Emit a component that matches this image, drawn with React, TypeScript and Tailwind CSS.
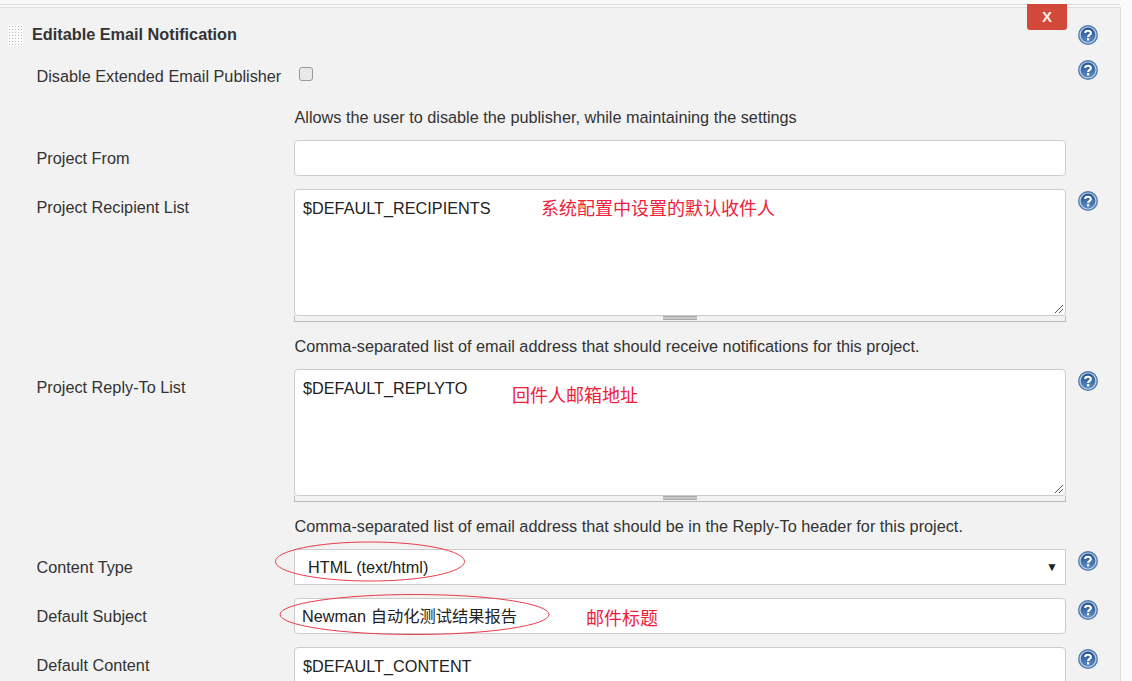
import React from "react";

const FONT = "font-['Liberation_Sans','Noto_Sans_CJK_SC',sans-serif]";

function HelpIcon() {
  return (
    <svg width="20" height="20" viewBox="0 0 20 20" className="block">
      <defs>
        <linearGradient id="helpFill" x1="0" y1="0" x2="0" y2="1">
          <stop offset="0" stopColor="#23508f" />
          <stop offset="1" stopColor="#5f8dc0" />
        </linearGradient>
      </defs>
      <circle cx="10" cy="10" r="10" fill="#4f7bb0" />
      <circle cx="10" cy="10" r="8.6" fill="#c4d4e8" />
      <circle cx="10" cy="10" r="7.4" fill="url(#helpFill)" />
      <path d="M7.2 8 C7.2 5.2 12.9 5 12.9 8 C12.9 9.9 10.1 9.9 10.1 12" fill="none" stroke="#fff" strokeWidth="2.1" />
      <rect x="9" y="13" width="2.2" height="2.4" fill="#fff" />
    </svg>
  );
}

function Label({ children }: { children: React.ReactNode }) {
  return <div className="w-[294px] shrink-0 pl-[36.5px] text-[16.25px] leading-[20px] text-[#333]">{children}</div>;
}

function Help() {
  return (
    <div className="ml-[12px] w-[20px] shrink-0">
      <HelpIcon />
    </div>
  );
}

function Description({ children, className }: { children: React.ReactNode; className?: string }) {
  return <div className={`pl-[294.5px] text-[16.25px] leading-[20px] text-[#333] ${className}`}>{children}</div>;
}

function TextArea({ value }: { value: string }) {
  return (
    <div className="w-[772px] shrink-0">
      <div className="relative h-[127px] rounded-[4px] border border-[#ccc] bg-white px-[8px] pt-[8px] text-[16.25px] leading-[20px] text-[#222]">
        {value}
        <svg width="10" height="10" viewBox="0 0 10 10" className="absolute bottom-[1px] right-[1px]">
          <path d="M1 9 L9 1 M5 9 L9 5" stroke="#555" strokeWidth="1" />
        </svg>
      </div>
      <div className="flex h-[6px] justify-center border-x border-b border-[#bbb] bg-[#f2f2f2]">
        <div className="h-[4px] w-[34px] border-y border-[#aaa] bg-[#c8c8c8]" />
      </div>
    </div>
  );
}

export default function App() {
  return (
    <div className={`relative h-[681px] w-[1132px] overflow-hidden bg-[#fafafa] ${FONT}`}>
      <div className="mr-[12px] h-[5px] border-b border-[#ddd]" />
      <div className="mr-[11px] mt-[2px] h-[700px] border-r border-t border-[#ddd] bg-[#f2f2f2]">
        <div className="flex h-[59px] items-start pt-[15px]">
          <div className="ml-[8px] mt-[2px] h-[21px] w-[15px] bg-[radial-gradient(#bbb_1px,#fbfbfb_1px)] bg-[length:3px_3px]" />
          <div className="ml-[9px] w-[1031px] text-[16.25px] font-bold leading-[22px] text-[#333]">Editable Email Notification</div>
          <div className="ml-[15px] mt-[2px]">
            <HelpIcon />
          </div>
        </div>

        <div className="flex h-[39px] items-start">
          <Label>
            <div className="mt-[-1px]">Disable Extended Email Publisher</div>
          </Label>
          <div className="w-[772px]">
            <div className="ml-[5px] h-[14px] w-[14px] rounded-[3px] border border-[#9a9a9a] bg-[#e9e9e9]" />
          </div>
          <div className="ml-[12px] mt-[-7px] w-[20px]">
            <HelpIcon />
          </div>
        </div>

        <Description className="mt-[1px]">Allows the user to disable the publisher, while maintaining the settings</Description>

        <div className="mt-[13px] flex items-center">
          <Label>Project From</Label>
          <div className="h-[36px] w-[772px] rounded-[4px] border border-[#ccc] bg-white" />
        </div>

        <div className="mt-[13px] flex items-start">
          <Label>
            <div className="pt-[8px]">Project Recipient List</div>
          </Label>
          <TextArea value="$DEFAULT_RECIPIENTS" />
          <div className="ml-[12px] mt-[2px]">
            <HelpIcon />
          </div>
        </div>

        <Description className="mt-[14px]">Comma-separated list of email address that should receive notifications for this project.</Description>

        <div className="mt-[13px] flex items-start">
          <Label>
            <div className="pt-[8px]">Project Reply-To List</div>
          </Label>
          <TextArea value="$DEFAULT_REPLYTO" />
          <div className="ml-[12px] mt-[2px]">
            <HelpIcon />
          </div>
        </div>

        <Description className="mt-[14px]">Comma-separated list of email address that should be in the Reply-To header for this project.</Description>

        <div className="mt-[13px] flex items-center">
          <Label>Content Type</Label>
          <div className="flex h-[36px] w-[772px] items-center justify-between border border-[#ccc] bg-white pl-[13px] pr-[7px] text-[16.25px] text-[#222]">
            <span>HTML (text/html)</span>
            <span className="text-[12px] text-[#222]">▼</span>
          </div>
          <div className="mb-[12px]">
            <Help />
          </div>
        </div>

        <div className="mt-[13px] flex items-center">
          <Label>Default Subject</Label>
          <div className="flex h-[36px] w-[772px] items-center rounded-[4px] border border-[#ccc] bg-white pl-[7px] text-[16.25px] text-[#222]">
            Newman 自动化测试结果报告
          </div>
          <div className="mb-[12px]">
            <Help />
          </div>
        </div>

        <div className="mt-[13px] flex items-start">
          <Label>
            <div className="pt-[8px]">Default Content</div>
          </Label>
          <div className="h-[127px] w-[772px] rounded-[4px] border border-[#ccc] bg-white px-[8px] pt-[8px] text-[16.25px] leading-[20px] text-[#222]">
            $DEFAULT_CONTENT
          </div>
          <div className="ml-[12px] mt-[2px]">
            <HelpIcon />
          </div>
        </div>
      </div>

      {/* delete button sits over the section edge */}
      <div className="absolute left-[1027px] top-[4px] flex h-[26px] w-[40px] items-center justify-center rounded-b-[3px] bg-[#d24939] text-[15px] font-bold text-[#fbeeee]">
        X
      </div>

      {/* red annotations drawn on top of the screenshot */}
      <div className="absolute left-[541px] top-[197px] text-[18px] leading-[24px] text-[#f0203a]">系统配置中设置的默认收件人</div>
      <div className="absolute left-[512px] top-[384px] text-[18px] leading-[24px] text-[#f0203a]">回件人邮箱地址</div>
      <div className="absolute left-[586px] top-[607px] text-[18px] leading-[24px] text-[#f0203a]">邮件标题</div>
      <svg width="1132" height="681" className="pointer-events-none absolute left-0 top-0">
        <ellipse cx="370" cy="561.5" rx="94.5" ry="19.5" fill="none" stroke="#ec3a4c" strokeWidth="1" />
        <ellipse cx="414.5" cy="614.5" rx="134.5" ry="20" fill="none" stroke="#ec3a4c" strokeWidth="1" />
      </svg>
    </div>
  );
}
